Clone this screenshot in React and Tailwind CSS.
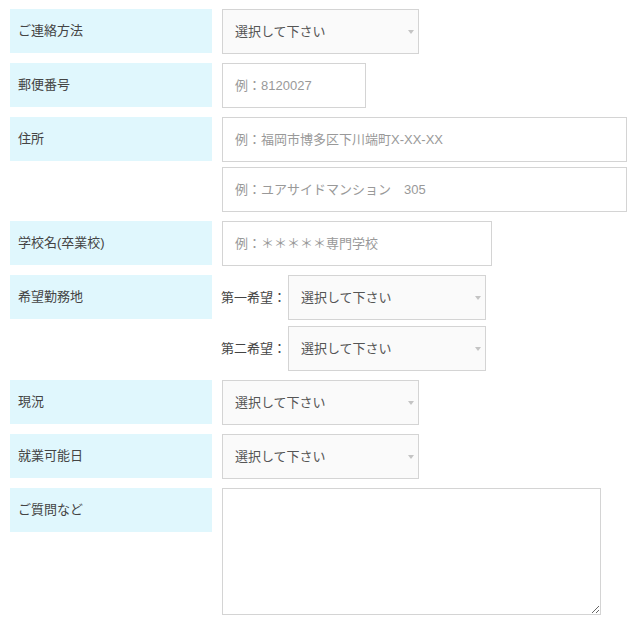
const font = { fontFamily: '"Liberation Sans", "Noto Sans CJK JP", sans-serif' };

const Label = ({ children }) => (
  <div className="w-[202px] h-[44px] shrink-0 bg-[#e0f7fd] pl-2 flex items-center text-[13px] text-[#444]">
    {children}
  </div>
);

const Select = ({ className = 'w-[197px]' }) => (
  <div className={`${className} h-[45px] border border-[#d4d4d4] bg-[#fafafa] flex items-center justify-between pl-3 pr-[4px] text-[13px] text-[#555]`}>
    <span>選択して下さい</span>
    <svg width="6" height="4" viewBox="0 0 6 4">
      <path d="M0 0 L6 0 L3 4 Z" fill="#c4c4c4" />
    </svg>
  </div>
);

const Input = ({ placeholder, className }) => (
  <div className={`${className} h-[45px] border border-[#d4d4d4] bg-white flex items-center pl-3 text-[13px] text-[#999] whitespace-pre`}>
    {placeholder}
  </div>
);

const Row = ({ label, children }) => (
  <div className="flex gap-[10px]">
    <Label>{label}</Label>
    <div className="flex flex-col">{children}</div>
  </div>
);

export default function App() {
  return (
    <div className="w-[640px] h-[628px] bg-white px-[10px] pt-[9px] flex flex-col gap-[9px]" style={font}>
      <Row label="ご連絡方法">
        <Select />
      </Row>
      <Row label="郵便番号">
        <Input className="w-[144px]" placeholder="例：8120027" />
      </Row>
      <Row label="住所">
        <div className="flex flex-col gap-[5px]">
          <Input className="w-[405px]" placeholder="例：福岡市博多区下川端町X-XX-XX" />
          <Input className="w-[405px]" placeholder="例：ユアサイドマンション　305" />
        </div>
      </Row>
      <Row label="学校名(卒業校)">
        <Input className="w-[270px]" placeholder="例：＊＊＊＊＊専門学校" />
      </Row>
      <Row label="希望勤務地">
        <div className="flex flex-col gap-[6px] -ml-[1px]">
          <div className="flex items-center gap-[2px] text-[13px] text-[#444]">
            <span className="w-[65px]">第一希望：</span>
            <Select className="w-[198px]" />
          </div>
          <div className="flex items-center gap-[2px] text-[13px] text-[#444]">
            <span className="w-[65px]">第二希望：</span>
            <Select className="w-[198px]" />
          </div>
        </div>
      </Row>
      <Row label="現況">
        <Select />
      </Row>
      <Row label="就業可能日">
        <Select />
      </Row>
      <Row label="ご質問など">
        <textarea className="w-[379px] h-[127px] border border-[#d4d4d4] bg-white outline-none resize" />
      </Row>
    </div>
  );
}
